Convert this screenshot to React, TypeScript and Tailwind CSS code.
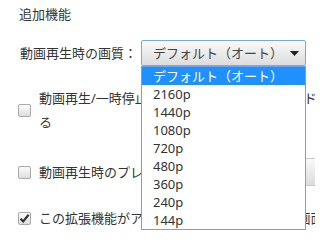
import React from 'react';

const options = ['デフォルト（オート）', '2160p', '1440p', '1080p', '720p', '480p', '360p', '240p', '144p'];

function Checkbox({ checked = false }: { checked?: boolean }) {
  return (
    <span className="relative flex w-[13px] h-[13px] shrink-0 rounded-[2px] border border-[#a9a9a9] bg-gradient-to-b from-[#fcfcfc] to-[#dedede]">
      {checked && (
        <svg viewBox="0 0 13 13" className="absolute -left-px -top-px w-[13px] h-[13px]">
          <path d="M2.5 6.8 L5.2 9.4 L10.6 2.8" fill="none" stroke="#333" strokeWidth="2.2" />
        </svg>
      )}
    </span>
  );
}

export default function App() {
  return (
    <div
      className="relative w-[315px] h-[237px] overflow-hidden bg-white text-[13px] text-[#333]"
      style={{ fontFamily: '"Noto Sans", "Noto Sans CJK JP", sans-serif' }}
    >
      <div className="w-[440px] pl-[19px] pt-[5px]">
        <div className="h-[18px] leading-[18px]">追加機能</div>

        {/* 画質 */}
        <div className="mt-[17px] flex items-center h-[26px]">
          <span className="w-[122px] pl-px whitespace-nowrap leading-[18px]">動画再生時の画質：</span>
          <div className="relative flex items-center w-[165px] h-[26px] rounded-[2px] border border-[#7aa7e6] bg-gradient-to-b from-[#fafafa] to-[#dcdcdc] pl-[11px] pr-[6px]">
            <span className="flex-1 whitespace-nowrap leading-[18px] text-[#444]">デフォルト（オート）</span>
            <svg viewBox="0 0 9 5" className="w-[9px] h-[5px]">
              <path d="M0 0 H9 L4.5 5 Z" fill="#222" />
            </svg>
          </div>
        </div>

        {/* 再生/一時停止 */}
        <div className="mt-[21px] flex items-center gap-[8px]">
          <span className="-ml-px"><Checkbox /></span>
          <div className="leading-[24px] whitespace-nowrap -mt-[1px]">
            動画再生/一時停止をクリックで実行するモードにす
            <br />
            る
          </div>
        </div>

        {/* プレイヤーサイズ */}
        <div className="mt-[24px] flex items-center h-[28px]">
          <span className="-ml-px"><Checkbox /></span>
          <span className="ml-[8px] w-[264px] whitespace-nowrap leading-[18px]">動画再生時のプレイヤーサイズ</span>
          <div className="w-[120px] h-[28px] rounded-[2px] border border-[#c8c8c8] bg-gradient-to-b from-[#fafafa] to-[#dcdcdc]" />
        </div>

        {/* 拡張機能 */}
        <div className="mt-[23px] flex items-center h-[18px]">
          <span className="-ml-px"><Checkbox checked /></span>
          <span className="ml-[8px] whitespace-nowrap leading-[18px]">この拡張機能がアクティブな時にキー操作で画面を切り替える</span>
        </div>
      </div>

      {/* open dropdown list */}
      <ul className="absolute left-[141px] top-[66px] w-[165px] border border-[#7c9fd8] bg-white">
        {options.map((o, i) => (
          <li
            key={o}
            className={`h-[18px] leading-[18px] pl-[11px] whitespace-nowrap ${i === 0 ? 'bg-[#1e90ff] text-white' : 'text-[#333]'}`}
          >
            {o}
          </li>
        ))}
      </ul>
    </div>
  );
}
